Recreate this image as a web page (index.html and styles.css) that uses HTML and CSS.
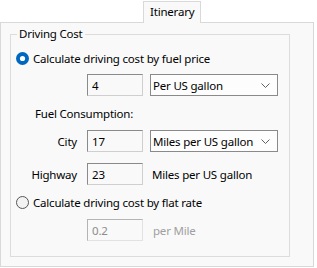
FILE: index.html
```html
<!DOCTYPE html>
<html lang="en">
<head>
    <meta charset="UTF-8">
    <title>Itinerary</title>
    <link rel="stylesheet" href="styles.css">
</head>
<body>
    <div class="tabs">
        <div class="tab">Itinerary</div>
    </div>

    <div class="panel">
        <fieldset class="group">
            <legend>Driving Cost</legend>

            <label class="radio-row first">
                <svg class="radio" width="13" height="13" viewBox="0 0 13 13">
                    <circle cx="6.5" cy="6.5" r="6.5" fill="#0067c0"/>
                    <circle cx="6.5" cy="6.5" r="2.6" fill="#fff"/>
                </svg>
                <span>Calculate driving cost by fuel price</span>
            </label>

            <div class="field-row price-row">
                <span class="field-label"></span>
                <input class="num" type="text" value="4">
                <div class="combo">
                    <span>Per US gallon</span>
                    <svg class="chevron" width="9" height="5" viewBox="0 0 9 5">
                        <path d="M0.5 0.5 L4.5 4.5 L8.5 0.5" fill="none" stroke="#606060" stroke-width="1"/>
                    </svg>
                </div>
            </div>

            <div class="section-title">Fuel Consumption:</div>

            <div class="field-row city-row">
                <span class="field-label">City</span>
                <input class="num" type="text" value="17">
                <div class="combo">
                    <span>Miles per US gallon</span>
                    <svg class="chevron" width="9" height="5" viewBox="0 0 9 5">
                        <path d="M0.5 0.5 L4.5 4.5 L8.5 0.5" fill="none" stroke="#606060" stroke-width="1"/>
                    </svg>
                </div>
            </div>

            <div class="field-row highway-row">
                <span class="field-label">Highway</span>
                <input class="num" type="text" value="23">
                <span class="unit">Miles per US gallon</span>
            </div>

            <label class="radio-row second">
                <svg class="radio" width="13" height="13" viewBox="0 0 13 13">
                    <circle cx="6.5" cy="6.5" r="6" fill="#f3f3f3" stroke="#555" stroke-width="1"/>
                </svg>
                <span>Calculate driving cost by flat rate</span>
            </label>

            <div class="field-row flat-row">
                <span class="field-label"></span>
                <input class="num" type="text" value="0.2" disabled>
                <span class="unit muted">per Mile</span>
            </div>
        </fieldset>
    </div>
</body>
</html>
```

FILE: styles.css
```css
body {
    margin: 0;
    background: #fff;
    font-family: "Noto Sans", "Open Sans", sans-serif;
    font-size: 11.5px;
    letter-spacing: -0.2px;
    color: #000;
}
.tabs {
    display: flex;
    padding-left: 143px;
    padding-top: 1px;
}
.tab {
    position: relative;
    height: 21px;
    margin-bottom: -1px;
    padding: 0 6px;
    line-height: 20px;
    background: #f9f9f9;
    border: 1px solid #d9d9d9;
    border-bottom: none;
}
.panel {
    width: 312px;
    height: 243px;
    background: #f9f9f9;
    border: 1px solid #d9d9d9;
}
.group {
    margin: 3px 0 0 9px;
    padding: 0 0 15px;
    width: 278px;
    border: 1px solid #dcdcdc;
    box-sizing: content-box;
}
.group legend {
    margin-left: 6px;
    padding: 0 2px;
    line-height: 16px;
}
.radio-row {
    display: flex;
    align-items: center;
    gap: 4px;
    height: 18px;
    margin-left: 5px;
    white-space: nowrap;
}
.radio-row.first { margin-top: 7px; }
.radio-row.second { margin-top: 8px; }
.field-row {
    display: flex;
    align-items: center;
    height: 22px;
    white-space: nowrap;
}
.price-row { margin-top: 7px; }
.city-row { margin-top: 8px; }
.highway-row { margin-top: 11px; }
.flat-row { margin-top: 8px; }
.field-label {
    width: 66px;
    margin-right: 10px;
    text-align: right;
}
.num {
    width: 56px;
    height: 22px;
    box-sizing: border-box;
    margin: 0 7px 0 0;
    padding: 0 4px;
    font: inherit;
    letter-spacing: inherit;
    color: #000;
    background: #f9f9f9;
    border: 1px solid;
    border-color: #8a8a8a #cfcfcf #cfcfcf #8a8a8a;
    outline: none;
}
.num:disabled {
    color: #8d8d8d;
    border-color: #b4b4b4 #e2e2e2 #e2e2e2 #b4b4b4;
}
.combo {
    display: flex;
    align-items: center;
    justify-content: space-between;
    width: 128px;
    height: 22px;
    box-sizing: border-box;
    padding: 0 7px 0 2px;
    background: #fdfdfd;
    border: 1px solid #8a8a8a;
}
.unit {
    margin-left: 2px;
}
.muted {
    margin-left: 3px;
    color: #a0a0a0;
}
.section-title {
    margin: 10px 0 0 24px;
    line-height: 16px;
}
```
